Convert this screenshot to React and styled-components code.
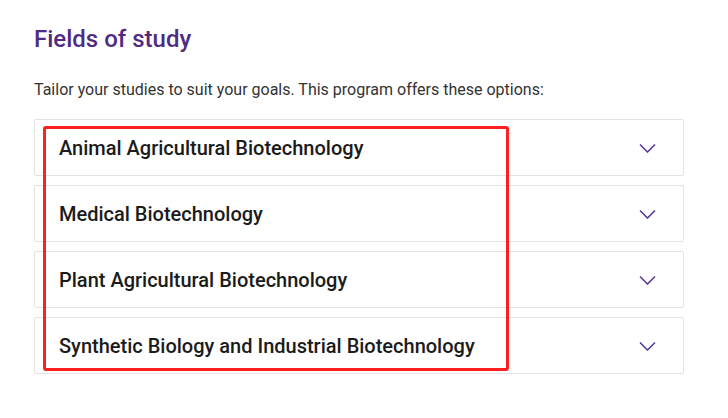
import React from 'react';
import styled, { createGlobalStyle } from 'styled-components';

const GlobalStyle = createGlobalStyle`
  * { box-sizing: border-box; }
  body {
    margin: 0;
    background: #fff;
    font-family: Roboto, "Liberation Sans", sans-serif;
  }
`;

const Page = styled.div`
  position: relative;
  padding: 24px 44px 0 34px;
`;

const Title = styled.h2`
  margin: 0 0 25px;
  font-size: 24px;
  line-height: 30px;
  font-weight: 500;
  color: #4f2b83;
`;

const Intro = styled.p`
  margin: 0 0 18px;
  font-size: 16px;
  line-height: 22px;
  color: #333;
`;

const List = styled.div`
  display: flex;
  flex-direction: column;
  gap: 9px;
`;

const Item = styled.div`
  display: flex;
  align-items: center;
  justify-content: space-between;
  height: 57px;
  padding: 1px 27px 0 24px;
  border: 1px solid #e2e2e2;
  border-radius: 2px;
`;

const ItemTitle = styled.h3`
  margin: 0;
  font-size: 20px;
  font-weight: 500;
  color: #1b1b1b;
`;

const Chevron = () => (
  <svg width="17" height="10" viewBox="0 0 17 10" fill="none">
    <path d="M1 1.5l7.5 7.5 7.5-7.5" stroke="#5a3a8e" strokeWidth="1.6" />
  </svg>
);

const Highlight = styled.div`
  position: absolute;
  left: 43px;
  top: 126px;
  width: 466px;
  height: 245px;
  border: 3px solid #ff1f1f;
  border-radius: 3px;
  pointer-events: none;
`;

const fields = [
  'Animal Agricultural Biotechnology',
  'Medical Biotechnology',
  'Plant Agricultural Biotechnology',
  'Synthetic Biology and Industrial Biotechnology',
];

export default function App() {
  return (
    <>
      <GlobalStyle />
      <Page>
        <Title>Fields of study</Title>
        <Intro>Tailor your studies to suit your goals. This program offers these options:</Intro>
        <List>
          {fields.map((f) => (
            <Item key={f}>
              <ItemTitle>{f}</ItemTitle>
              <Chevron />
            </Item>
          ))}
        </List>
        <Highlight />
      </Page>
    </>
  );
}
